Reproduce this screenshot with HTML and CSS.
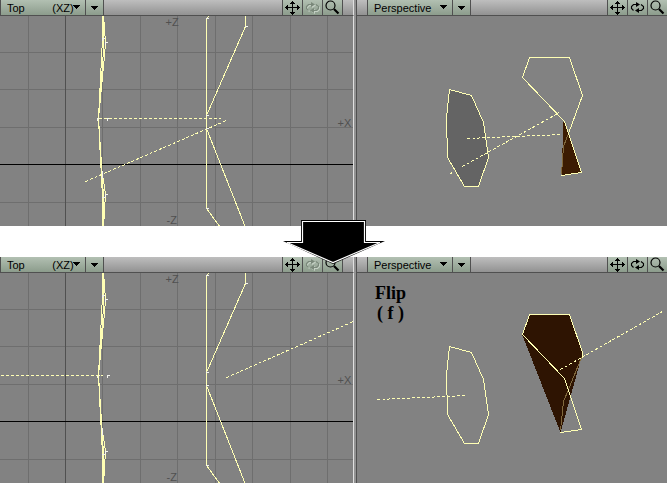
FILE: index.html
```
<!DOCTYPE html>
<html lang="en">
<head>
<meta charset="utf-8">
<title>Flip polygons</title>
<link rel="stylesheet" href="styles.css">
</head>
<body>
<svg class="defs" aria-hidden="true">
  <symbol id="move" viewBox="0 0 19 15"><path d="M9 1h1v1h1v1h1v1h-2v3h4v-2h1v1h1v1h1v1h-1v1h-1v1h-1v-2h-4v4h2v1h-1v1h-1v1h-1v-1h-1v-1h-1v-1h2v-4h-4v2h-1v-1h-1v-1h-1v-1h1v-1h1v-1h1v2h4v-3h-2v-1h1v-1h1z" fill="currentColor"/></symbol>
  <symbol id="rotate" viewBox="0 0 19 15"><path d="M5.500 10.500L3.500 8.500V6.500L5.500 4.500H9M13 4.500L15.500 6.500V8.500L13.500 10.500H10" fill="none" stroke="currentColor" stroke-width="1.100"/><path d="M8 2l4 2.500-4 2.500zM11 8l-4 2.500 4 2.500z" fill="currentColor"/></symbol>
  <symbol id="magnify" viewBox="0 0 19 15"><circle cx="7.500" cy="5.500" r="4.500" fill="none" stroke="currentColor" stroke-width="1.200"/><path d="M11 9L15.500 13.500" stroke="currentColor" stroke-width="2.200"/></symbol>
  <symbol id="caret" viewBox="0 0 8 4"><path d="M0 0H7V1H6V2H5V3H4V4H3V3H2V2H1V1H0Z" fill="currentColor"/></symbol>

  <symbol id="top-mesh" viewBox="-.5 15.500 353 210">
    <path class="grid" d="M28 15V227M102 15V227M140 15V227M177 15V227M215 15V227M252 15V227M290 15V227M327 15V227M-1 52H353M-1 89H353M-1 127H353M-1 202H353"/>
    <path class="axis-z" d="M65 15V227"/>
    <path class="axis-x" d="M-1 164H353"/>
    <path class="wire" d="M102 15V38L98 118L102 197V227M103 15V50L98 118L101 164L103 197V227M103 15L105 42L104 55L98 118L100 160L105 194L103 227"/>
    <path class="wire" d="M209 15L206 18V208L220 227M245 15V26L206 115V128L245 227"/>
    <path class="point" d="M101 38H104M102 37V40M104 42H107M105 41V44M96 118H99M97 117V120M106 118H109M107 117V120M102 170V178M104 194H107M105 193V196M101 197H104M205 18H208M244 26H247M205 115H208M205 128H208M205 208H208"/>
  </symbol>
</svg>

<main class="steps">
  <section class="step" aria-label="Before">
    <div class="pane pane-top">
      <header class="bar">
        <label class="view"><select aria-label="View"><option>Top&nbsp;&nbsp;&nbsp;&nbsp;&nbsp;&nbsp;&nbsp;&nbsp;&nbsp;(XZ)</option></select><svg class="caret"><use href="#caret"/></svg></label>
        <button class="mode" aria-label="Display mode"><svg class="caret"><use href="#caret"/></svg></button>
        <div class="tools">
          <button aria-label="Move"><svg><use href="#move"/></svg></button>
          <button aria-label="Rotate" disabled><svg><use href="#rotate"/></svg></button>
          <button aria-label="Zoom"><svg><use href="#magnify"/></svg></button>
        </div>
      </header>
      <svg class="canvas" viewBox="-.5 15.500 353 210" role="img" aria-label="Top view">
        <use href="#top-mesh" x="-.5" y="15.500" width="353" height="210"/>
        <g class="axis-label"><text x="165" y="25">+Z</text><text x="166" y="223">-Z</text><text x="337" y="126">+X</text></g>
        <path class="normal" d="M98 118H220M85 181L226 120"/>
      </svg>
    </div>
    <div class="pane">
      <header class="bar">
        <label class="view"><select aria-label="View"><option>Perspective</option></select><svg class="caret"><use href="#caret"/></svg></label>
        <button class="mode" aria-label="Display mode"><svg class="caret"><use href="#caret"/></svg></button>
        <div class="tools">
          <button aria-label="Move"><svg><use href="#move"/></svg></button>
          <button aria-label="Rotate"><svg><use href="#rotate"/></svg></button>
          <button aria-label="Zoom"><svg><use href="#magnify"/></svg></button>
        </div>
      </header>
      <svg class="canvas" viewBox="356.500 15.500 310 210" role="img" aria-label="Perspective view">
        <path class="wire face" d="M449 89L471 95L483 122L488 157L478 186H464L447 157L446 117Z"/>
        <path class="inside" d="M564 121L581 172L561 175L563 121Z"/>
        <path class="hidden-edge" d="M568 133L563 146L561 174"/>
        <path class="wire" d="M568 133L582 95L569 57H529L522 77L564 121L581 172L561 175"/>
        <path class="normal" d="M467 138L561 134M450 173L452 172M462 166L559 112"/>
      </svg>
    </div>
  </section>

  <div class="between">
    <svg class="arrow" viewBox="0 0 102 45" aria-hidden="true">
      <path d="M18 0H83V21H102L50 44L0 21H18Z" fill="#000"/>
      <path d="M19.500 1.500H81.500V22.500H97L50 42.500L4 22.500H19.500Z" fill="#000" stroke="#fff" stroke-width="1.200"/>
    </svg>
  </div>

  <section class="step" aria-label="After">
    <div class="pane pane-top">
      <header class="bar">
        <label class="view"><select aria-label="View"><option>Top&nbsp;&nbsp;&nbsp;&nbsp;&nbsp;&nbsp;&nbsp;&nbsp;&nbsp;(XZ)</option></select><svg class="caret"><use href="#caret"/></svg></label>
        <button class="mode" aria-label="Display mode"><svg class="caret"><use href="#caret"/></svg></button>
        <div class="tools">
          <button aria-label="Move"><svg><use href="#move"/></svg></button>
          <button aria-label="Rotate" disabled><svg><use href="#rotate"/></svg></button>
          <button aria-label="Zoom"><svg><use href="#magnify"/></svg></button>
        </div>
      </header>
      <svg class="canvas" viewBox="-.5 15.500 353 210" role="img" aria-label="Top view">
        <use href="#top-mesh" x="-.5" y="15.500" width="353" height="210"/>
        <g class="axis-label"><text x="165" y="25">+Z</text><text x="166" y="223">-Z</text><text x="337" y="126">+X</text></g>
        <path class="normal" d="M0 118H102M226 120L353 64"/>
      </svg>
    </div>
    <div class="pane">
      <header class="bar">
        <label class="view"><select aria-label="View"><option>Perspective</option></select><svg class="caret"><use href="#caret"/></svg></label>
        <button class="mode" aria-label="Display mode"><svg class="caret"><use href="#caret"/></svg></button>
        <div class="tools">
          <button aria-label="Move"><svg><use href="#move"/></svg></button>
          <button aria-label="Rotate"><svg><use href="#rotate"/></svg></button>
          <button aria-label="Zoom"><svg><use href="#magnify"/></svg></button>
        </div>
      </header>
      <div class="stage">
        <svg class="canvas" viewBox="356.500 15.500 310 210" role="img" aria-label="Perspective view">
          <path class="wire" d="M449 89L471 95L483 122L488 157L478 186H464L447 157L446 117Z"/>
          <path class="inside flipped" d="M529 57H569L582 96L560 175L522 78Z"/>
          <path class="hidden-edge" d="M581 100L568 132L563 144L560 173"/>
          <path class="wire" d="M582 99V95L569 57H529L522 77L564 121L581 172L560 175"/>
          <path class="normal" d="M377 142L467 138M560 112L662 54"/>
        </svg>
        <p class="caption">Flip<br>( f )</p>
      </div>
    </div>
  </section>
</main>
</body>
</html>
```
FILE: styles.css
```
* { box-sizing: border-box; }

body {
  margin: 0;
  background: #fff;
  font-family: "Liberation Sans", Arial, sans-serif;
  font-size: 11px;
  color: #000;
}

.defs { position: absolute; width: 0; height: 0; }

.step {
  display: grid;
  grid-template-columns: 357fr 310fr;
  background: #828282;
}

.pane { min-width: 0; }

.pane-top {
  display: grid;
  grid-template-columns: 1fr;
  border-right: 1px solid #505050;
  padding-right: 2px;
  background: #929292;
}

.pane-top > .canvas,
.pane-top > .bar { border-right: 1px solid #e0e0e0; }

.bar {
  display: flex;
  height: 16px;
  border-bottom: 1px solid #505050;
  background: linear-gradient(#bebebe, #929292);
}

.pane:not(.pane-top) > .bar { padding-left: 10px; }

.view {
  position: relative;
  width: 86px;
  border: solid #505050;
  border-width: 0 1px;
  background: linear-gradient(#b2c0b2, #8c9c8c);
}

.view select {
  appearance: none;
  display: block;
  width: 100%;
  height: 15px;
  margin: 0;
  padding: 1px 0 0 6px;
  border: 0;
  background: none;
  font: inherit;
  line-height: 14px;
  color: inherit;
}

.caret { width: 8px; height: 4px; display: block; shape-rendering: crispEdges; }

.view .caret {
  position: absolute;
  top: 5px;
  right: 4px;
  pointer-events: none;
}

.bar button {
  display: flex;
  align-items: center;
  justify-content: center;
  margin: 0;
  padding: 0;
  border: 0;
  background: linear-gradient(#b2c0b2, #8c9c8c);
  color: #000;
}

.bar .mode {
  width: 18px;
  border-right: 1px solid #505050;
}

.tools { display: flex; margin-left: auto; }

.pane-top .tools {
  margin-right: 10px;
  border-right: 1px solid #505050;
}

.tools button {
  width: 20px;
  border-left: 1px solid #505050;
}

.tools svg { width: 19px; height: 15px; display: block; }

.bar button:disabled { color: #7a887a; }
.tools button:disabled svg { filter: drop-shadow(1px 1px 0 #c4d0c4); }

.canvas {
  display: block;
  width: 100%;
  height: auto;
  background: #828282;
}

.canvas path,
#top-mesh path {
  fill: none;
  stroke-width: 1px;
  shape-rendering: crispEdges;
}

#top-mesh .grid { stroke: #6e6e6e; }
#top-mesh .axis-z { stroke: #505050; }
#top-mesh .axis-x { stroke: #000; }
.axis-label { fill: #505050; font-size: 11px; }
.canvas .wire, #top-mesh .wire { stroke: #ffffb4; }
#top-mesh .point { stroke: #f4f4ee; }
.canvas .normal { stroke: #ffffb4; stroke-dasharray: 3 2; }
.canvas .face { fill: #646464; }
.canvas .inside { fill: #3c1c02; }
.canvas .flipped { fill: #2e1402; }
.canvas .hidden-edge { stroke: #80683c; }

.between { position: relative; height: 31px; }

.arrow {
  position: absolute;
  left: 50%;
  top: -6px;
  width: 102px;
  height: 45px;
  margin-left: -51px;
}

.stage { position: relative; }

.caption {
  position: absolute;
  top: 10px;
  left: 18px;
  margin: 0;
  font: bold 18px/20px "Liberation Serif", "Times New Roman", serif;
  text-align: center;
}
```
